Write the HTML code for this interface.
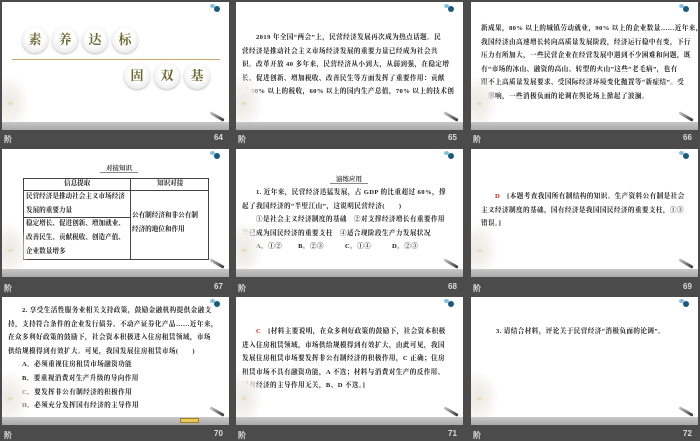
<!DOCTYPE html>
<html><head><meta charset="utf-8"><style>
*{margin:0;padding:0;box-sizing:border-box}
body{width:700px;height:438px;background:#4b4b4b;position:relative;overflow:hidden;font-family:"Liberation Serif","Noto Serif CJK SC","Noto Sans CJK SC",serif;}
.s{position:absolute;width:227px;height:128px;background:#fff;overflow:hidden}
.s .band{position:absolute;left:0;right:0;bottom:0;height:8px;background:linear-gradient(#c8c8c8,#a9a9a9)}
.s .fl{position:absolute;left:-8px;bottom:8px;width:36px;height:48px;background:radial-gradient(ellipse at 40% 60%,#ebe9e3 0,#f3f2ef 35%,rgba(255,255,255,0) 70%)}
.s .fl:after{content:"";position:absolute;left:14px;top:28px;width:5px;height:3px;border-radius:50%;background:#ecdcb0}
.s .pen{position:absolute;right:4px;bottom:12px;width:16px;height:3px;background:linear-gradient(90deg,#ccc,#333);transform:rotate(30deg);border-radius:2px}
.s .dot{position:absolute;right:9px;top:4px;width:6px;height:6px;border-radius:50%;background:#1a5a7a}
.s .dot:before{content:"";position:absolute;left:-4px;top:-2px;width:5px;height:4px;border-radius:50%;background:#7ec3e0}
.lab{position:absolute;color:#ddd;font-size:8px;font-weight:bold;font-family:"Liberation Sans",sans-serif}
.t{position:absolute;font-size:6.6px;font-weight:bold;color:#222;white-space:nowrap;line-height:13.5px;letter-spacing:0.4px}
.c{position:absolute;width:26px;height:26px;border-radius:50%;background:radial-gradient(circle at 50% 40%,#fff 40%,#ececec 75%,#d4d4d4);box-shadow:0 1px 2px #bbb;font-size:13px;font-weight:bold;color:#6e6630;text-align:center;line-height:26px}
.badge{position:absolute;width:19px;height:5px;background:#e8c85a;border:1px solid #a08020}
.tl{position:absolute;font-size:6.5px;font-weight:bold;color:#333;border-bottom:1px solid #888;padding:0 6px}
</style></head><body>

<!-- Row 1 -->
<div class="s" style="left:2px;top:2px">
 <div class="c" style="left:20px;top:25px">素</div>
 <div class="c" style="left:50px;top:25px">养</div>
 <div class="c" style="left:80px;top:25px">达</div>
 <div class="c" style="left:110px;top:25px">标</div>
 <div style="position:absolute;left:10px;top:57px;width:208px;height:1px;background:#c9a870"></div>
 <div class="c" style="left:122px;top:61px">固</div>
 <div class="c" style="left:152px;top:61px">双</div>
 <div class="c" style="left:182px;top:61px">基</div>
 <div class="fl"></div><div class="pen"></div><div class="dot"></div><div class="band"></div>
</div>
<div class="s" style="left:236px;top:2px">
 <div class="t" style="left:6px;top:29px">　　2019 年全国“两会”上，民营经济发展再次成为热点话题。民<br>营经济是推动社会主义市场经济发展的重要力量已经成为社会共<br>识。改革开放 40 多年来，民营经济从小到大，从弱到强，在稳定增<br>长、促进创新、增加税收、改善民生等方面发挥了重要作用：贡献<br>了 50% 以上的税收，60% 以上的国内生产总值，70% 以上的技术创</div>
 <div class="fl"></div><div class="pen"></div><div class="dot"></div><div class="band"></div>
</div>
<div class="s" style="left:471px;top:2px">
 <div class="t" style="left:10px;top:20px">新成果，80% 以上的城镇劳动就业，90% 以上的企业数量……近年来，<br>我国经济由高速增长转向高质量发展阶段，经济运行稳中有变，下行<br>压力有所加大，一些民营企业在经营发展中遇到不少困难和问题，既<br>有“市场的冰山、融资的高山、转型的火山”这些“老毛病”，也有<br>跟不上高质量发展要求、受国际经济环境变化抛置等“新症结”。受<br>此影响，一些消极负面的论调在舆论场上掀起了波澜。</div>
 <div class="fl"></div><div class="pen"></div><div class="dot"></div><div class="band"></div>
</div>
<div class="lab" style="left:4px;top:134px">阶</div><div class="lab" style="left:214px;top:133px">64</div>
<div class="lab" style="left:238px;top:134px">阶</div><div class="lab" style="left:448px;top:133px">65</div>
<div class="lab" style="left:473px;top:134px">阶</div><div class="lab" style="left:683px;top:133px">66</div>

<!-- Row 2 -->
<div class="s" style="left:2px;top:149px">
 <div class="tl" style="left:98px;top:14px">对接知识</div>
 <div style="position:absolute;left:21px;top:29px;width:186px;height:82px;border:1px solid #444"></div>
 <div style="position:absolute;left:128px;top:29px;width:1px;height:82px;background:#444"></div>
 <div style="position:absolute;left:21px;top:41px;width:186px;height:1px;background:#444"></div>
 <div style="position:absolute;left:21px;top:68px;width:107px;height:1px;background:#444"></div>
 <div class="t" style="left:62px;top:28px;line-height:13px;letter-spacing:0">信息提取</div>
 <div class="t" style="left:155px;top:28px;line-height:13px;letter-spacing:0">知识对接</div>
 <div class="t" style="left:24px;top:41px;line-height:13.5px;letter-spacing:0">民营经济是推动社会主义市场经济<br>发展的重要力量</div>
 <div class="t" style="left:24px;top:68px;line-height:14px;letter-spacing:0">稳定增长、促进创新、增加就业、<br>改善民生、贡献税收、创造产值、<br>企业数量增多</div>
 <div class="t" style="left:130px;top:60px;line-height:14px;letter-spacing:0">公有制经济和非公有制<br>经济的地位和作用</div>
 <div class="fl"></div><div class="pen"></div><div class="dot"></div><div class="band"></div>
</div>
<div class="s" style="left:236px;top:149px">
 <div class="tl" style="left:94px;top:25px">演练应用</div>
 <div class="t" style="left:6px;top:37px">　　1. 近年来，民营经济迅猛发展，占 GDP 的比重超过 60%，撑<br>起了我国经济的“半壁江山”，这说明民营经济(　　)<br>　　①是社会主义经济制度的基础　②对支撑经济增长有重要作用<br>③已成为国民经济的重要支柱　④适合现阶段生产力发展状况<br>　　A．①②　　 B．②③　　　C．①④　　　D．②③</div>
 <div class="badge" style="left:177px;top:121px"></div>
 <div class="fl"></div><div class="pen"></div><div class="dot"></div><div class="band"></div>
</div>
<div class="s" style="left:471px;top:149px">
 <div class="t" style="left:10px;top:41px">　　<span style="color:#d22">D</span>　[本题考查我国所有制结构的知识。生产资料公有制是社会<br>主义经济制度的基础，国有经济是我国国民经济的重要支柱，①③<br>错误。]</div>
 <div class="fl"></div><div class="pen"></div><div class="dot"></div><div class="band"></div>
</div>
<div class="lab" style="left:4px;top:283px">阶</div><div class="lab" style="left:214px;top:282px">67</div>
<div class="lab" style="left:238px;top:283px">阶</div><div class="lab" style="left:448px;top:282px">68</div>
<div class="lab" style="left:473px;top:283px">阶</div><div class="lab" style="left:683px;top:282px">69</div>

<!-- Row 3 -->
<div class="s" style="left:2px;top:297px">
 <div class="t" style="left:6px;top:7px;line-height:13.6px">　　2. 享受生活性服务业相关支持政策，鼓励金融机构提供金融支<br>持，支持符合条件的企业发行债券、不动产证券化产品……近年来，<br>在众多利好政策的鼓励下，社会资本积极进入住房租赁领域，市场<br>供给规模得到有效扩大。可见，我国发展住房租赁市场(　　)<br>　　A．必须重视住房租赁市场融资功能<br>　　B．要重视消费对生产升级的导向作用<br>　　C．要发挥非公有制经济的积极作用<br>　　D．必须充分发挥国有经济的主导作用</div>
 <div class="fl"></div><div class="pen"></div><div class="dot"></div><div class="band"></div>
 <div class="badge" style="left:178px;top:121px"></div>
</div>
<div class="s" style="left:236px;top:297px">
 <div class="t" style="left:6px;top:28px">　　<span style="color:#d22">C</span>　[材料主要说明，在众多利好政策的鼓励下，社会资本积极<br>进入住房租赁领域，市场供给规模得到有效扩大，由此可见，我国<br>发展住房租赁市场要发挥非公有制经济的积极作用，C 正确；住房<br>租赁市场不具有融资功能，A 不选；材料与消费对生产的反作用、<br>国有经济的主导作用无关，B、D 不选。]</div>
 <div class="fl"></div><div class="pen"></div><div class="dot"></div><div class="band"></div>
</div>
<div class="s" style="left:471px;top:297px">
 <div class="t" style="left:25px;top:28px">3. 请结合材料，评论关于民营经济“消极负面的论调”。</div>
 <div class="fl"></div><div class="pen"></div><div class="dot"></div><div class="band"></div>
</div>
<div class="lab" style="left:4px;top:430px">阶</div><div class="lab" style="left:214px;top:429px">70</div>
<div class="lab" style="left:238px;top:430px">阶</div><div class="lab" style="left:448px;top:429px">71</div>
<div class="lab" style="left:473px;top:430px">阶</div><div class="lab" style="left:683px;top:429px">72</div>
</body></html>
